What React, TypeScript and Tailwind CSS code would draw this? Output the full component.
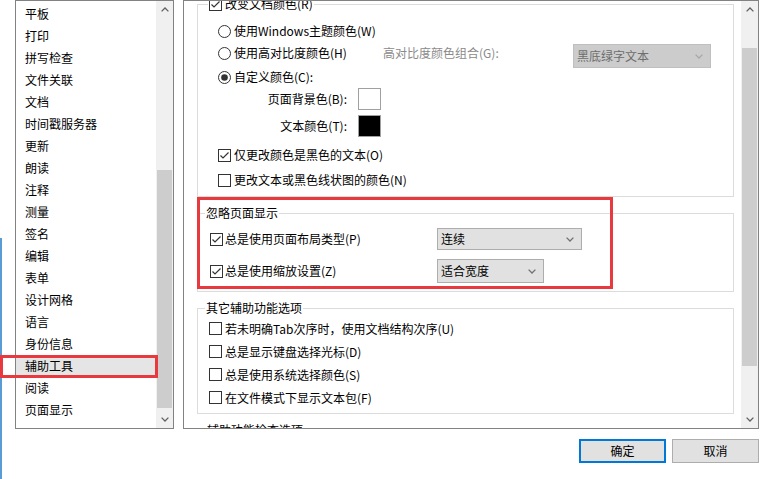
import React from 'react';

const navItems = [
  '平板', '打印', '拼写检查', '文件关联', '文档', '时间戳服务器', '更新', '朗读', '注释', '测量',
  '签名', '编辑', '表单', '设计网格', '语言', '身份信息', '辅助工具', '阅读', '页面显示',
];

const CheckBox = ({ checked }: { checked?: boolean }) => (
  <svg width="13" height="13" viewBox="0 0 13 13" className="shrink-0">
    <rect x="0.5" y="0.5" width="12" height="12" fill="#fff" stroke="#333" />
    {checked && <path d="M2.5 6.5 L5 9 L10.5 3.5" fill="none" stroke="#333" strokeWidth="1.2" />}
  </svg>
);

const Radio = ({ checked }: { checked?: boolean }) => (
  <svg width="13" height="13" viewBox="0 0 13 13" className="shrink-0">
    <circle cx="6.5" cy="6.5" r="6" fill="#fff" stroke="#333" />
    {checked && <circle cx="6.5" cy="6.5" r="3.3" fill="#333" />}
  </svg>
);

const Chevron = ({ up, color }: { up?: boolean; color: string }) => (
  <svg width="8" height="5" viewBox="0 0 8 5" className="shrink-0">
    <path
      d={up ? 'M0.6 4.4 L4 1 L7.4 4.4' : 'M0.6 0.6 L4 4 L7.4 0.6'}
      fill="none"
      stroke={color}
      strokeWidth="1.3"
    />
  </svg>
);

const Select = ({ value, className, disabled }: { value: string; className: string; disabled?: boolean }) => (
  <div
    className={`flex items-center justify-between border pl-[3px] pr-[7px] ${
      disabled ? 'border-[#bfbfbf] bg-[#cccccc] text-[#6d6d6d]' : 'border-[#adadad] bg-[#e1e1e1] text-black'
    } ${className}`}
  >
    <span>{value}</span>
    <Chevron color={disabled ? '#a8a8a8' : '#707070'} />
  </div>
);

const ScrollBar = ({ thumb }: { thumb: string }) => (
  <div className="w-[17px] shrink-0 flex flex-col bg-[#f0f0f0]">
    <div className="h-[17px] flex items-center justify-center">
      <Chevron up color="#606060" />
    </div>
    <div className="flex-1 flex flex-col">
      <div className={`w-[15px] mx-auto bg-[#cdcdcd] ${thumb}`} />
    </div>
    <div className="h-[17px] flex items-center justify-center">
      <Chevron color="#606060" />
    </div>
  </div>
);

export default function App() {
  return (
    <div className="relative w-[779px] h-[479px] overflow-hidden bg-white flex text-[12px] leading-[16px] text-black font-['Noto_Sans_CJK_SC','Microsoft_YaHei',sans-serif]">
      {/* window edge */}
      <div className="w-[2px] mt-[238px] bg-[#5b9bd5]" />

      <div className="ml-[13px] flex flex-col">
        <div className="flex gap-[9px] h-[429px]">
          {/* category list */}
          <div className="w-[159px] border border-[#828282] flex">
            <div className="flex-1 pt-[2px]">
              {navItems.map((item) => (
                <div
                  key={item}
                  className={`h-[22px] flex items-center pl-[9px] ${item === '辅助工具' ? 'bg-[#e5e5e5]' : ''}`}
                >
                  {item}
                </div>
              ))}
            </div>
            <ScrollBar thumb="mt-[152px] h-[238px]" />
          </div>

          {/* settings panel, scrolled part-way down */}
          <div className="w-[576px] border border-[#828282] flex overflow-hidden">
            <div className="flex-1 overflow-hidden">
              <div className="mt-[-5px] ml-[13px] w-[537px] flex flex-col">
                <fieldset className="border border-[#dcdcdc] pb-[5px]">
                  <legend className="ml-[10px] px-[1px] flex items-center gap-[3px]">
                    <CheckBox checked />
                    改变文档颜色(R)
                  </legend>
                  <div className="mt-[8px] h-[22px] pl-[20px] flex items-center gap-[3px]">
                    <Radio />
                    使用Windows主题颜色(W)
                  </div>
                  <div className="h-[22px] pl-[20px] flex items-start">
                    <div className="w-[165px] h-[22px] flex items-center gap-[3px]">
                      <Radio />
                      使用高对比度颜色(H)
                    </div>
                    <div className="w-[190px] h-[22px] flex items-center text-[#8a8a8a]">高对比度颜色组合(G):</div>
                    <Select value="黑底绿字文本" disabled className="mt-[2px] w-[138px] h-[24px]" />
                  </div>
                  <div className="mt-[2px] h-[22px] pl-[20px] flex items-center gap-[3px]">
                    <Radio checked />
                    自定义颜色(C):
                  </div>
                  <div className="h-[22px] flex items-center">
                    <div className="w-[149px] text-right">页面背景色(B):</div>
                    <div className="ml-[11px] w-[23px] h-[22px] border border-[#a0a0a0] bg-white" />
                  </div>
                  <div className="mt-[5px] h-[22px] flex items-center">
                    <div className="w-[149px] text-right">文本颜色(T):</div>
                    <div className="ml-[11px] w-[23px] h-[22px] border border-[#a0a0a0] bg-black" />
                  </div>
                  <div className="mt-[7px] h-[22px] pl-[20px] flex items-center gap-[3px]">
                    <CheckBox checked />
                    仅更改颜色是黑色的文本(O)
                  </div>
                  <div className="mt-[3px] h-[22px] pl-[20px] flex items-center gap-[3px]">
                    <CheckBox />
                    更改文本或黑色线状图的颜色(N)
                  </div>
                </fieldset>

                <fieldset className="mt-[8px] border border-[#dcdcdc] pb-[8px]">
                  <legend className="ml-[7px] px-[1px]">忽略页面显示</legend>
                  <div className="mt-[7px] h-[22px] pl-[12px] flex items-center">
                    <div className="w-[227px] flex items-center gap-[2px]">
                      <CheckBox checked />
                      总是使用页面布局类型(P)
                    </div>
                    <Select value="连续" className="w-[145px] h-[22px]" />
                  </div>
                  <div className="mt-[9px] h-[24px] pl-[12px] flex items-center">
                    <div className="w-[227px] flex items-center gap-[2px]">
                      <CheckBox checked />
                      总是使用缩放设置(Z)
                    </div>
                    <Select value="适合宽度" className="w-[107px] h-[24px]" />
                  </div>
                </fieldset>

                <fieldset className="mt-[8px] border border-[#dcdcdc] pb-[4px]">
                  <legend className="ml-[7px] px-[1px]">其它辅助功能选项</legend>
                  <div className="mt-[1px] flex flex-col">
                    {[
                      '若未明确Tab次序时，使用文档结构次序(U)',
                      '总是显示键盘选择光标(D)',
                      '总是使用系统选择颜色(S)',
                      '在文件模式下显示文本包(F)',
                    ].map((label) => (
                      <div key={label} className="h-[23px] pl-[11px] flex items-center gap-[3px]">
                        <CheckBox />
                        {label}
                      </div>
                    ))}
                  </div>
                </fieldset>

                <fieldset className="mt-[8px] border border-[#dcdcdc] h-[30px]">
                  <legend className="ml-[8px] px-[1px]">辅助功能检查选项</legend>
                </fieldset>
              </div>
            </div>
            <ScrollBar thumb="mt-[30px] h-[318px]" />
          </div>
        </div>

        {/* dialog buttons */}
        <div className="mt-[10px] flex justify-end gap-[6px]">
          <button className="w-[87px] h-[24px] border-2 border-[#0078d7] bg-[#e1e1e1] flex items-center justify-center">
            确定
          </button>
          <button className="w-[87px] h-[24px] border border-[#adadad] bg-[#e1e1e1] flex items-center justify-center">
            取消
          </button>
        </div>
      </div>

      {/* red annotation boxes */}
      <div className="absolute left-0 top-[355px] w-[158px] h-[23px] border-[3px] border-[#e8393f]" />
      <div className="absolute left-[197px] top-[197px] w-[416px] h-[92px] border-[3px] border-[#e8393f]" />
    </div>
  );
}
